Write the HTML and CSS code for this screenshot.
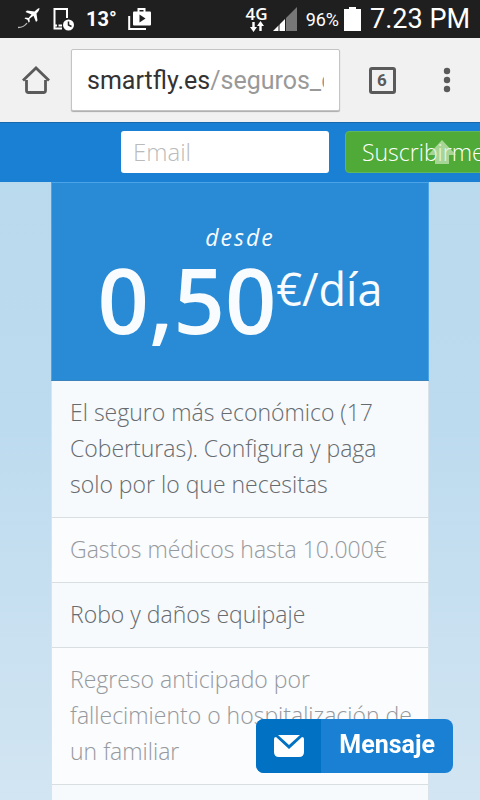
FILE: index.html
```html
<!DOCTYPE html>
<html lang="es">
<head>
<meta charset="utf-8">
<meta name="viewport" content="width=device-width, initial-scale=1">
<title>Seguros de viaje</title>
<link rel="stylesheet" href="styles.css">
</head>
<body>
<div class="status">
  <div class="status-group notices">
    <svg width="24" height="22" viewBox="0 0 24 22" aria-hidden="true"><path fill="#fff" d="M21.500 0c-2 .5-3.500 2-5 3.500L9 2.500 7.500 4l6 2.500-3 3.500-3-.5-1 1 3 1.200 1.200 3 1-1-.2-3 4-3L18 14l1.500-1.500-1-7C20 4 21.500 2 21.500 0z"/><path d="M0 19.500c4 0 7-1.500 9-4.500" stroke="#bbb" stroke-width="1.300" fill="none"/></svg>
    <svg width="22" height="24" viewBox="0 0 22 24" aria-hidden="true"><path d="M14 11V2H1.500v19.500H9" fill="none" stroke="#fff" stroke-width="2"/><path d="M1 18.500h3M5.500 18.500H9" stroke="#fff" stroke-width="2"/><circle cx="15.500" cy="18" r="5.500" fill="#fff"/><path d="M15.500 14.500V18l3 1.500" stroke="#1f1f1f" stroke-width="1.500" fill="none"/></svg>
    <span class="temp">13°</span>
    <svg width="24" height="24" viewBox="0 0 24 24" aria-hidden="true"><path d="M1.200 9v13H18" fill="none" stroke="#fff" stroke-width="2"/><path d="M10.500 6V2h6v4" fill="none" stroke="#fff" stroke-width="2"/><rect x="5" y="4.500" width="18" height="14" rx="1" fill="#fff"/><path d="M11.500 7.500v8l6-4z" fill="#1f1f1f"/></svg>
  </div>
  <div class="status-group system">
    <span class="network">4G
      <svg width="14" height="11" viewBox="0 0 14 11" aria-hidden="true"><path d="M3.500 1v7M10.500 10V3" stroke="#fff" stroke-width="2.400"/><path d="M0 6h7l-3.500 5zM7 5h7l-3.500-5z" fill="#fff"/></svg></span>
    <svg width="24" height="24" viewBox="0 0 24 24" aria-hidden="true"><path d="M0 24 12 12v12z" fill="#fff"/><path d="M13 24V11L24 0v24z" fill="#777"/><path d="M6 12v12M12.500 8v16" stroke="#1f1f1f"/></svg>
    <span class="battery">96%</span>
    <svg width="17" height="24" viewBox="0 0 17 24" aria-hidden="true"><path d="M0 2h5V0h7v2h5v22H0z" fill="#fff"/></svg>
    <span class="clock">7.23 PM</span>
  </div>
</div>
<header class="toolbar">
  <button class="tool home" aria-label="Inicio"><svg width="28" height="28" viewBox="0 0 28 28" aria-hidden="true"><path d="M1 14.500 14 2l13 12.500M4.500 14v10.500q0 2 2 2h15q2 0 2-2V14" fill="none" stroke="#5a5a5a" stroke-width="2.800"/></svg></button>
  <a class="address" href="#"><span class="url">smartfly.es<span class="path">/seguros_de_viaje</span></span></a>
  <button class="tool" aria-label="Pestañas abiertas"><span class="tabs">6</span></button>
  <button class="tool" aria-label="Menú"><svg width="8" height="26" viewBox="0 0 8 26" aria-hidden="true"><g fill="#5a5a5a"><circle cx="4" cy="4" r="3.200"/><circle cx="4" cy="13" r="3.200"/><circle cx="4" cy="22" r="3.200"/></g></svg></button>
</header>
<main class="page">
  <form class="subscribe">
    <input type="email" placeholder="Email" aria-label="Email">
    <button type="button" class="join">Suscribirme</button>
    <a class="to-top" href="#" aria-label="Subir"><svg width="28" height="24" viewBox="0 0 28 24" aria-hidden="true"><path d="M14 0 28 15h-7v9H7v-9H0z" fill="#d5edca" fill-opacity=".65"/></svg></a>
  </form>
  <section class="plan">
    <div class="price">
      <em>desde</em>
      <p class="amount"><strong>0,50</strong><span>€/día</span></p>
    </div>
    <ul class="features">
      <li>El seguro más económico (17 Coberturas). Configura y paga solo por lo que necesitas</li>
      <li>Gastos médicos hasta 10.000€</li>
      <li>Robo y daños equipaje</li>
      <li>Regreso anticipado por fallecimiento o hospitalización de un familiar</li>
      <li></li>
    </ul>
  </section>
</main>
<button class="message"><span class="message-icon"><svg width="30" height="23" viewBox="0 0 30 23" aria-hidden="true"><path d="M4 0h22L15 10z" fill="#fff"/><path d="M0 4q0-2 2-2l13 12L28 2q2 0 2 2v13q0 5-5 5H5q-5 0-5-5z" fill="#fff"/></svg></span><span class="message-label">Mensaje</span></button>
</body>
</html>
```
FILE: styles.css
```css
* { box-sizing: border-box; }
html { height: 100%; overflow: hidden; }
body {
  display: flex;
  flex-direction: column;
  height: 100%;
  margin: 0;
  overflow: hidden;
  font-family: "Open Sans", sans-serif;
}
button { border: 0; font: inherit; padding: 0; }
svg { display: block; flex: none; }

.status {
  display: flex;
  flex: none;
  justify-content: space-between;
  align-items: center;
  height: 38px;
  padding: 0 10px 0 18px;
  background: #1f1f1f;
  color: #fff;
  font-family: Roboto, sans-serif;
}
.status-group { display: flex; align-items: center; }
.notices { gap: 11px; }
.system { gap: 5px; }
.temp { font-size: 20px; font-weight: 700; }
.network {
  display: flex;
  flex-direction: column;
  align-items: center;
  font: 600 17px/15px "Open Sans", sans-serif;
}
.battery { margin-left: 4px; font-size: 18px; }
.clock { margin-left: 4px; font-size: 27px; }

.toolbar {
  display: flex;
  flex: none;
  align-items: center;
  height: 85px;
  background: #f1f1f1;
  border-bottom: 1px solid #1769ac;
  font-family: Roboto, sans-serif;
}
.tool {
  display: flex;
  justify-content: center;
  align-items: center;
  flex: none;
  width: 64px;
  height: 60px;
  background: none;
}
.tool:last-child { width: 66px; }
.home { width: 71px; }
.address {
  flex: 1;
  min-width: 0;
  margin-right: 10px;
  padding: 2px 15px 0;
  background: #fff;
  border: 1px solid #c4c4c4;
  border-radius: 2px;
  box-shadow: 0 1px 1px #aaa;
  color: #333;
  font-size: 25px;
  line-height: 58px;
  text-decoration: none;
}
.url { display: block; overflow: hidden; white-space: nowrap; }
.path { color: #999; }
.tabs {
  width: 27px;
  height: 27px;
  border: 3px solid #5a5a5a;
  border-radius: 3px;
  color: #5a5a5a;
  font: 700 17px/21px Roboto, sans-serif;
}

.page {
  flex: 1;
  min-height: 0;
  overflow: hidden;
  background: linear-gradient(#b9d9ec, #bddbef 45%, #d2e5f2);
}
.subscribe {
  position: relative;
  display: flex;
  align-items: center;
  gap: 16px;
  height: 59px;
  padding: 0 0 2px 121px;
  background: #1980d4;
  overflow: hidden;
}
.subscribe input {
  width: 208px;
  height: 42px;
  flex: none;
  padding: 0 12px;
  border: 0;
  border-radius: 3px;
  background: #fff;
  font: 300 24px "Open Sans", sans-serif;
}
.subscribe input::placeholder { color: #bbb; opacity: 1; }
.join {
  flex: none;
  padding: 0 16px;
  height: 42px;
  border: 1px solid #5fb660;
  border-radius: 4px;
  background: #4faa37;
  color: #fff;
  font-size: 23px;
  font-weight: 300;
}
.to-top { position: absolute; right: 24px; top: 17px; }

.plan { margin: 0 51px; }
.price {
  height: 199px;
  padding-top: 37px;
  border: 1px solid #4ba3e8;
  border-bottom-color: #3d83bb;
  background: #298ad5;
  color: #f8fcff;
  text-align: center;
}
.price em { display: block; font-size: 23px; line-height: 34px; letter-spacing: 2px; }
.amount { display: flex; justify-content: center; align-items: flex-start; margin: 0; }
.amount strong { font-size: 90px; font-weight: 600; line-height: 90px; }
.amount span { font-size: 45px; line-height: 70px; }
.features {
  margin: 0;
  padding: 0;
  list-style: none;
  border: 1px solid #d9e3e9;
  border-width: 0 1px;
  background: #f7fafc;
  color: #666b6f;
  font-size: 23px;
  font-weight: 300;
  line-height: 36px;
}
.features li { min-height: 65px; padding: 13px 12px 15px 18px; border-bottom: 1px solid #d9dee1; }
.features li:nth-child(even) { background: #fafcfe; color: #96999c; }

.message {
  position: fixed;
  right: 27px;
  bottom: 27px;
  display: flex;
  height: 54px;
  border-radius: 8px;
  overflow: hidden;
  background: #1980d4;
  color: #fff;
}
.message-icon { display: flex; align-items: center; justify-content: center; width: 65px; height: 54px; background: #0071c3; }
.message-label { padding: 0 18px; font: 700 25px/51px Roboto, sans-serif; }
```
